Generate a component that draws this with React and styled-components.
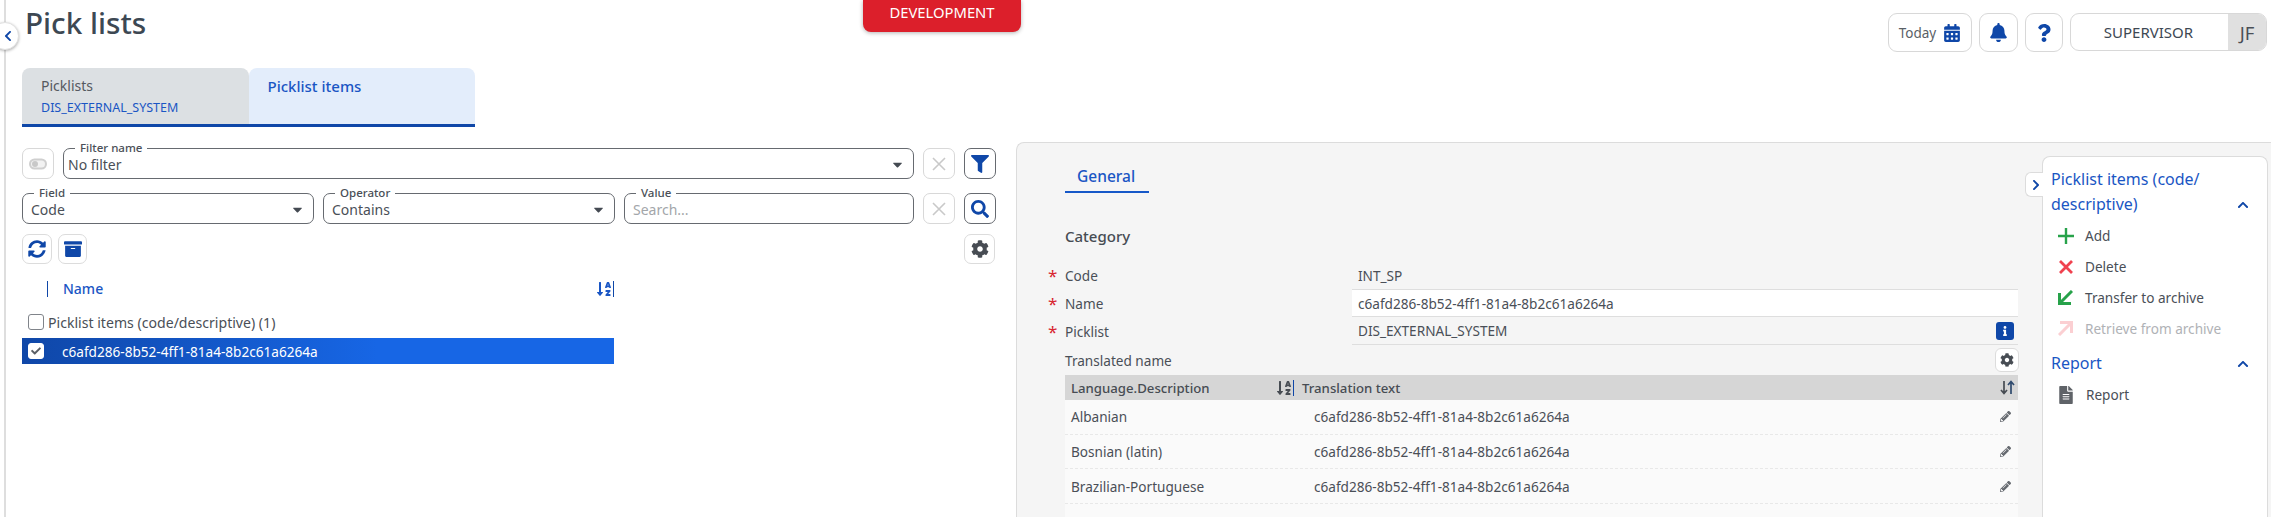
import React from "react";
import styled, { createGlobalStyle } from "styled-components";
import {
  FaArchive, FaBell, FaCalendarAlt, FaCaretDown, FaChevronLeft, FaChevronRight, FaChevronUp, FaCog,
  FaFileAlt, FaFilter, FaInfo, FaPencilAlt, FaQuestion, FaSearch, FaSortAlphaDown, FaSyncAlt, FaCheck,
} from "react-icons/fa";

const BLUE = "#0f47a8";
const LINK = "#1a56c4";
const TEXT = "#4a4f57";

const Global = createGlobalStyle`
  html, body { margin: 0; padding: 0; background: #fff; }
  body { font-family: "Noto Sans", "Open Sans", sans-serif; font-size: 14px; color: ${TEXT}; }
  * { box-sizing: border-box; }
`;

const Page = styled.div`
  position: relative;
  display: flex;
  width: 2271px;
  height: 517px;
  overflow: hidden;
  background: #fff;
`;
const Rail = styled.div`
  flex: 0 0 6px;
  margin-left: 4px;
  width: 2px;
  border-left: 2px solid #dedede;
`;
const Collapse = styled.button`
  position: absolute;
  left: -9px;
  top: 22px;
  width: 28px;
  height: 28px;
  padding: 0 0 0 5px;
  display: flex;
  align-items: center;
  justify-content: center;
  border: 1px solid #e2e2e2;
  border-radius: 50%;
  background: #fff;
  color: ${BLUE};
  font-size: 12px;
  box-shadow: 0 1px 3px rgba(0, 0, 0, 0.3);
`;
const Main = styled.div`
  flex: 1;
  min-width: 0;
  display: flex;
  flex-direction: column;
  padding-left: 12px;
`;
const Header = styled.header`
  display: flex;
  justify-content: space-between;
  align-items: flex-start;
  height: 68px;
  padding-right: 4px;
`;
const Title = styled.h1`
  margin: 3px 0 0 3px;
  font-size: 29.7px;
  line-height: 40px;
  font-weight: 500;
  color: #3d4853;
`;
const Banner = styled.div`
  position: absolute;
  left: 863px;
  top: 0;
  width: 158px;
  height: 32px;
  display: flex;
  align-items: center;
  justify-content: center;
  padding-bottom: 8px;
  background: #dc1f2b;
  color: #fff;
  font-size: 14.8px;
  border-radius: 0 0 8px 8px;
  box-shadow: 0 1px 4px rgba(0, 0, 0, 0.3);
`;
const HeaderTools = styled.div`
  display: flex;
  gap: 7px;
  margin-top: 13px;
`;
const ToolButton = styled.button`
  height: 39px;
  width: ${(p) => p.$w}px;
  padding: 0;
  display: flex;
  align-items: center;
  justify-content: center;
  gap: 7px;
  border: 1px solid #d8d8d8;
  border-radius: 9px;
  background: #fff;
  color: ${BLUE};
  font: inherit;
  font-size: ${(p) => p.$icon || 14}px;
  span { color: #5a5f66; font-size: 13.5px; }
`;
const UserBox = styled.div`
  width: 197px;
  height: 38px;
  display: flex;
  align-items: stretch;
  border: 1px solid #d8d8d8;
  border-radius: 9px;
  overflow: hidden;
`;
const Role = styled.div`
  flex: 1;
  display: flex;
  align-items: center;
  justify-content: center;
  padding-right: 2px;
  font-size: 15px;
  color: #3d4853;
`;
const Initials = styled.div`
  width: 38px;
  display: flex;
  align-items: center;
  justify-content: center;
  background: #e0e0e0;
  font-size: 18.5px;
  color: #4a4f57;
`;
const Tabs = styled.nav`
  display: flex;
  width: 453px;
  height: 59px;
  border-bottom: 3px solid ${BLUE};
`;
const Tab = styled.div`
  flex: 1;
  padding: 8px 18px 0 19px;
  border-radius: 8px 8px 0 0;
  background: ${(p) => (p.$active ? "#e3edfb" : "#dce0e3")};
  color: ${(p) => (p.$active ? LINK : "#55595f")};
  font-size: ${(p) => (p.$active ? 15 : 14)}px;
  line-height: 20px;
  font-weight: ${(p) => (p.$active ? 500 : 400)};
`;
const TabSub = styled.div`
  color: ${LINK};
  font-size: 12.5px;
  line-height: 20px;
  margin-top: 2px;
`;
const Content = styled.div`
  flex: 1;
  min-height: 0;
  display: flex;
  gap: 20px;
  margin-top: 15px;
`;
const LeftCol = styled.section`
  flex: 0 0 974px;
  padding-top: 6px;
`;
const FilterRow = styled.div`
  display: flex;
  align-items: center;
  gap: 9px;
  height: 31px;
  margin-bottom: 14px;
`;
const SquareBtn = styled.button`
  flex: 0 0 32px;
  width: 32px;
  height: 31px;
  padding: 0;
  display: flex;
  align-items: center;
  justify-content: center;
  border: 1px solid ${(p) => (p.$strong ? "#666a70" : "#d8d8d8")};
  border-radius: 7px;
  background: #fff;
  color: ${(p) => p.$color || BLUE};
  font-size: ${(p) => p.$size || 18}px;
`;
const Field = styled.div`
  position: relative;
  flex: ${(p) => (p.$w ? `0 0 ${p.$w}px` : "1")};
  height: 31px;
  display: flex;
  align-items: center;
  justify-content: space-between;
  padding: 2px 8px 0 ${(p) => p.$pad || 8}px;
  border: 1px solid #666a70;
  border-radius: 7px;
  font-size: 14px;
  color: ${(p) => (p.$muted ? "#a3a6aa" : TEXT)};
`;
const Legend = styled.label`
  position: absolute;
  top: -8px;
  left: 11px;
  padding: 0 5px;
  background: #fff;
  font-size: 11.5px;
  line-height: 14px;
  font-weight: 500;
  color: #4a4f57;
`;
const Caret = styled(FaCaretDown)`
  font-size: 15px;
  color: #444a52;
`;
const ToolRow = styled.div`
  display: flex;
  align-items: center;
  gap: 6px;
  margin-top: -4px;
`;
const SmallBtn = styled.button`
  width: ${(p) => p.$w || 30}px;
  height: 30px;
  padding: 0;
  display: flex;
  align-items: center;
  justify-content: center;
  margin-left: ${(p) => (p.$push ? "auto" : "0")};
  margin-right: ${(p) => (p.$push ? "1px" : "0")};
  border: 1px solid #dcdcdc;
  border-radius: 7px;
  background: #fff;
  color: ${(p) => p.$color || BLUE};
  font-size: 18px;
`;
const ListHead = styled.div`
  display: flex;
  align-items: center;
  justify-content: space-between;
  width: 592px;
  height: 16px;
  margin-top: 17px;
  padding-left: 25px;
  color: ${LINK};
  font-weight: 500;
  font-size: 14px;
`;
const HeadName = styled.span`
  display: block;
  border-left: 1px solid ${BLUE};
  padding-left: 15px;
  line-height: 16px;
`;
const SortIcon = styled.span`
  display: flex;
  align-items: center;
  height: 16px;
  padding-right: 1px;
  border-right: 1px solid ${BLUE};
  font-size: 16px;
  color: ${(p) => p.$color || LINK};
`;
const GroupRow = styled.div`
  display: flex;
  align-items: center;
  gap: 4px;
  height: 24px;
  margin-top: 13px;
  padding-left: 6px;
  font-size: 14.1px;
`;
const Box = styled.span`
  flex: 0 0 16px;
  width: 16px;
  height: 16px;
  display: flex;
  align-items: center;
  justify-content: center;
  background: #fff;
  border: 1px solid ${(p) => (p.$on ? "#fff" : "#80848a")};
  border-radius: 3px;
  color: #5a5f66;
  font-size: 10px;
`;
const SelectedRow = styled.div`
  display: flex;
  align-items: center;
  gap: 18px;
  width: 592px;
  height: 26px;
  margin-top: 4px;
  padding-left: 6px;
  background: linear-gradient(90deg, ${BLUE}, #1766e5 60%);
  color: #fff;
  font-size: 13.6px;
`;
const Panel = styled.section`
  flex: 1;
  min-width: 0;
  display: flex;
  gap: 24px;
  padding: 13px 3px 0 48px;
  background: #f5f5f5;
  border-top: 1px solid #dcdcdc;
  border-left: 1px solid #dcdcdc;
  border-top-left-radius: 8px;
  overflow: hidden;
`;
const Form = styled.div`
  flex: 1;
  min-width: 0;
  padding-top: 9px;
`;
const SubTab = styled.div`
  display: inline-block;
  height: 28px;
  padding: 0 14px 0 12px;
  border-bottom: 2px solid #1658c8;
  color: ${LINK};
  font-size: 15.5px;
  font-weight: 500;
  line-height: 22px;
`;
const Category = styled.h3`
  margin: 29px 0 11px;
  font-size: 15px;
  line-height: 28px;
  font-weight: 500;
  color: #474c53;
`;
const FormRow = styled.div`
  display: grid;
  grid-template-columns: 287px 1fr;
  height: 28px;
  align-items: center;
`;
const Label = styled.div`
  position: relative;
  font-size: 13.6px;
  &::before {
    content: "*";
    position: absolute;
    left: -17px;
    top: -2px;
    color: #d8252f;
    font-size: 17px;
  }
`;
const Value = styled.div`
  display: flex;
  align-items: center;
  justify-content: space-between;
  height: 100%;
  padding: 0 5px 0 6px;
  background: ${(p) => (p.$input ? "#fff" : "transparent")};
  border-top: ${(p) => (p.$input ? "1px solid #dedede" : "none")};
  border-bottom: ${(p) => (p.$plain ? "none" : "1px solid #dedede")};
  font-size: 13.6px;
`;
const InfoBadge = styled.span`
  width: 18px;
  height: 18px;
  display: flex;
  align-items: center;
  justify-content: center;
  margin-right: -1px;
  border-radius: 3px;
  background: ${BLUE};
  color: #fff;
  font-size: 10px;
`;
const TransRow = styled.div`
  display: flex;
  align-items: center;
  justify-content: space-between;
  height: 30px;
  font-size: 13.6px;
`;
const GearMini = styled.button`
  width: 24px;
  height: 24px;
  margin-right: -1px;
  padding: 0;
  display: flex;
  align-items: center;
  justify-content: center;
  border: 1px solid #dcdcdc;
  border-radius: 6px;
  background: #fff;
  color: #474c53;
  font-size: 14px;
`;
const TableHead = styled.div`
  display: grid;
  grid-template-columns: 229px 1fr auto;
  align-items: center;
  height: 25px;
  background: #d6d6d6;
  font-size: 13.2px;
  font-weight: 500;
  color: #474c53;
`;
const HeadCell = styled.div`
  display: flex;
  align-items: center;
  justify-content: space-between;
  padding-left: ${(p) => p.$pad}px;
`;
const SwapIcon = styled.svg`
  display: block;
  width: 15px;
  height: 15px;
  margin-right: 3px;
`;
const TableRow = styled.div`
  display: grid;
  grid-template-columns: 243px 1fr auto;
  align-items: center;
  height: ${(p) => (p.$tall ? 40 : 34.7)}px;
  padding: ${(p) => (p.$tall ? "5px" : "0")} 7px 0 6px;
  background: #fafafa;
  border-bottom: 1px dashed #e8e8e8;
  font-size: 13.6px;
`;
const Pencil = styled(FaPencilAlt)`
  font-size: 11px;
  color: #666a70;
`;
const Card = styled.aside`
  position: relative;
  flex: 0 0 226px;
  padding: 10px 8px 0;
  background: #fff;
  border: 1px solid #dcdcdc;
  border-bottom: none;
  border-radius: 8px 8px 0 0;
`;
const CardToggle = styled.button`
  position: absolute;
  left: -18px;
  top: 15px;
  width: 18px;
  height: 25px;
  padding: 0 0 0 2px;
  display: flex;
  align-items: center;
  justify-content: center;
  background: #fff;
  border: 1px solid #dcdcdc;
  border-right: none;
  border-radius: 6px 0 0 6px;
  color: ${BLUE};
  font-size: 12px;
`;
const SectionHead = styled.div`
  display: flex;
  align-items: flex-end;
  justify-content: space-between;
  margin-top: ${(p) => p.$gap || 0}px;
  padding-right: 10px;
  color: ${LINK};
  font-size: 16px;
  line-height: 25px;
  margin-bottom: 3px;
  svg { font-size: 12px; color: ${BLUE}; margin-bottom: 6px; }
  span { width: 170px; }
`;
const ActionItem = styled.div`
  display: flex;
  align-items: center;
  gap: 11px;
  height: 31px;
  padding-left: 6px;
  font-size: 13.6px;
  color: ${(p) => (p.$off ? "#b0b2b6" : TEXT)};
`;
const ActionIcon = styled.span`
  flex: 0 0 17px;
  display: flex;
  align-items: center;
  justify-content: center;
  color: ${(p) => p.$color};
  opacity: ${(p) => (p.$off ? 0.25 : 1)};
  font-size: 18px;
`;
const Glyph = styled.svg`
  display: block;
  width: ${(p) => p.$s || 15}px;
  height: ${(p) => p.$s || 15}px;
  transform: ${(p) => (p.$flip ? "rotate(180deg)" : "none")};
`;

const UID = "c6afd286-8b52-4ff1-81a4-8b2c61a6264a";

const Arrow = ({ flip }) => (
  <Glyph viewBox="0 0 15 15" $flip={flip}>
    <path d="M14 1 3 12M1.5 3v10.5H13" fill="none" stroke="currentColor" strokeWidth="3" />
  </Glyph>
);
const Cross = ({ s = 14, w = 2.8 }) => (
  <Glyph viewBox="0 0 14 14" $s={s}>
    <path d="M1 1l12 12M13 1 1 13" fill="none" stroke="currentColor" strokeWidth={w} />
  </Glyph>
);
const Plus = () => (
  <Glyph viewBox="0 0 16 16" $s={16}>
    <path d="M8 0v16M0 8h16" fill="none" stroke="currentColor" strokeWidth="2.4" />
  </Glyph>
);
const Toggle = () => (
  <Glyph viewBox="0 0 18 12" $s={18}>
    <rect x="1" y="1.5" width="16" height="9" rx="4.5" fill="#f2f2f2" stroke="#cfcfcf" strokeWidth="2" />
    <circle cx="6" cy="6" r="3" fill="#c8c8c8" />
  </Glyph>
);

export default function App() {
  return (
    <Page>
      <Global />
      <Rail />
      <Collapse aria-label="Collapse"><FaChevronLeft /></Collapse>
      <Banner>DEVELOPMENT</Banner>
      <Main>
        <Header>
          <Title>Pick lists</Title>
          <HeaderTools>
            <ToolButton $w={84} $icon={18}><span>Today</span><FaCalendarAlt /></ToolButton>
            <ToolButton $w={39} $icon={19}><FaBell /></ToolButton>
            <ToolButton $w={38} $icon={18}><FaQuestion /></ToolButton>
            <UserBox><Role>SUPERVISOR</Role><Initials>JF</Initials></UserBox>
          </HeaderTools>
        </Header>
        <Tabs>
          <Tab>Picklists<TabSub>DIS_EXTERNAL_SYSTEM</TabSub></Tab>
          <Tab $active>Picklist items</Tab>
        </Tabs>
        <Content>
          <LeftCol>
            <FilterRow>
              <SquareBtn><Toggle /></SquareBtn>
              <Field $pad={4}><Legend>Filter name</Legend>No filter<Caret /></Field>
              <SquareBtn $color="#c9c9c9"><Cross w={1.6} /></SquareBtn>
              <SquareBtn $strong><FaFilter /></SquareBtn>
            </FilterRow>
            <FilterRow>
              <Field $w={292}><Legend>Field</Legend>Code<Caret /></Field>
              <Field $w={292}><Legend>Operator</Legend>Contains<Caret /></Field>
              <Field $muted><Legend>Value</Legend>Search...</Field>
              <SquareBtn $color="#c9c9c9"><Cross w={1.6} /></SquareBtn>
              <SquareBtn $strong><FaSearch /></SquareBtn>
            </FilterRow>
            <ToolRow>
              <SmallBtn $w={30}><FaSyncAlt /></SmallBtn>
              <SmallBtn $w={29}><FaArchive /></SmallBtn>
              <SmallBtn $w={31} $push $color="#474c53"><FaCog /></SmallBtn>
            </ToolRow>
            <ListHead>
              <HeadName>Name</HeadName>
              <SortIcon><FaSortAlphaDown /></SortIcon>
            </ListHead>
            <GroupRow><Box />Picklist items (code/descriptive) (1)</GroupRow>
            <SelectedRow><Box $on><FaCheck /></Box>{UID}</SelectedRow>
          </LeftCol>
          <Panel>
            <Form>
              <SubTab>General</SubTab>
              <Category>Category</Category>
              <FormRow><Label>Code</Label><Value $plain>INT_SP</Value></FormRow>
              <FormRow><Label>Name</Label><Value $input>{UID}</Value></FormRow>
              <FormRow><Label>Picklist</Label><Value>DIS_EXTERNAL_SYSTEM<InfoBadge><FaInfo /></InfoBadge></Value></FormRow>
              <TransRow>Translated name<GearMini><FaCog /></GearMini></TransRow>
              <TableHead>
                <HeadCell $pad={6}>Language.Description<SortIcon $color="#474c53"><FaSortAlphaDown /></SortIcon></HeadCell>
                <HeadCell $pad={8}>Translation text</HeadCell>
                <SwapIcon viewBox="0 0 15 15">
                  <path d="M4 1v12M1 10l3 3.5L7 10" fill="none" stroke="#474c53" strokeWidth="1.7" />
                  <path d="M11 14V2M8 5l3-3.5L14 5" fill="none" stroke="#2f4a6e" strokeWidth="1.7" />
                </SwapIcon>
              </TableHead>
              <TableRow><span>Albanian</span><span>{UID}</span><Pencil /></TableRow>
              <TableRow><span>Bosnian (latin)</span><span>{UID}</span><Pencil /></TableRow>
              <TableRow><span>Brazilian-Portuguese</span><span>{UID}</span><Pencil /></TableRow>
              <TableRow $tall><span>Bulgarian</span><span>{UID}</span><Pencil /></TableRow>
            </Form>
            <Card>
              <CardToggle aria-label="Toggle"><FaChevronRight /></CardToggle>
              <SectionHead><span>Picklist items (code/ descriptive)</span><FaChevronUp /></SectionHead>
              <ActionItem><ActionIcon $color="#27a24a"><Plus /></ActionIcon>Add</ActionItem>
              <ActionItem><ActionIcon $color="#f0424f"><Cross /></ActionIcon>Delete</ActionItem>
              <ActionItem><ActionIcon $color="#27a24a"><Arrow /></ActionIcon>Transfer to archive</ActionItem>
              <ActionItem $off><ActionIcon $color="#f0424f" $off><Arrow flip /></ActionIcon>Retrieve from archive</ActionItem>
              <SectionHead $gap={7}><span>Report</span><FaChevronUp /></SectionHead>
              <ActionItem><ActionIcon $color="#5f6368"><FaFileAlt /></ActionIcon>Report</ActionItem>
            </Card>
          </Panel>
        </Content>
      </Main>
    </Page>
  );
}
